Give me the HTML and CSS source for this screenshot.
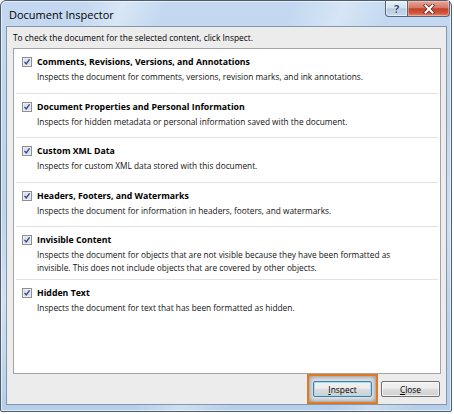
FILE: index.html
```html
<!DOCTYPE html>
<html lang="en">
<head>
<meta charset="utf-8">
<title>Document Inspector</title>
<link rel="stylesheet" href="styles.css">
</head>
<body>
<div class="window">
  <div class="titlebar">
    <span class="title">Document Inspector</span>
    <div class="caption">
      <span class="cap-btn help">?</span>
      <span class="cap-btn close">
        <svg width="12" height="10" viewBox="0 0 12 10" aria-hidden="true">
          <path d="M2.5 1.5 L9.5 8.5 M9.5 1.5 L2.5 8.5" stroke="#5a2a24" stroke-width="3.6" stroke-linecap="square"/>
          <path d="M2.5 1.5 L9.5 8.5 M9.5 1.5 L2.5 8.5" stroke="#ffffff" stroke-width="2" stroke-linecap="square"/>
        </svg>
      </span>
    </div>
  </div>

  <div class="client">
    <p class="intro">To check the document for the selected content, click Inspect.</p>

    <ul class="checks">
      <li class="check">
        <svg class="box" width="10" height="10" viewBox="0 0 10 10" aria-hidden="true"><rect x="0.5" y="0.5" width="9" height="9" fill="#f4f4f4" stroke="#8e8f8f"/><rect x="1.5" y="1.5" width="7" height="7" fill="#dde2ea"/><path d="M2.5 4.9 L4.2 6.9 L7.6 2.4" fill="none" stroke="#2a4594" stroke-width="1.3"/></svg>
        <div class="check-text">
          <div class="check-title">Comments, Revisions, Versions, and Annotations</div>
          <div class="check-desc">Inspects the document for comments, versions, revision marks, and ink annotations.</div>
        </div>
      </li>
      <li class="check">
        <svg class="box" width="10" height="10" viewBox="0 0 10 10" aria-hidden="true"><rect x="0.5" y="0.5" width="9" height="9" fill="#f4f4f4" stroke="#8e8f8f"/><rect x="1.5" y="1.5" width="7" height="7" fill="#dde2ea"/><path d="M2.5 4.9 L4.2 6.9 L7.6 2.4" fill="none" stroke="#2a4594" stroke-width="1.3"/></svg>
        <div class="check-text">
          <div class="check-title">Document Properties and Personal Information</div>
          <div class="check-desc">Inspects for hidden metadata or personal information saved with the document.</div>
        </div>
      </li>
      <li class="check">
        <svg class="box" width="10" height="10" viewBox="0 0 10 10" aria-hidden="true"><rect x="0.5" y="0.5" width="9" height="9" fill="#f4f4f4" stroke="#8e8f8f"/><rect x="1.5" y="1.5" width="7" height="7" fill="#dde2ea"/><path d="M2.5 4.9 L4.2 6.9 L7.6 2.4" fill="none" stroke="#2a4594" stroke-width="1.3"/></svg>
        <div class="check-text">
          <div class="check-title">Custom XML Data</div>
          <div class="check-desc">Inspects for custom XML data stored with this document.</div>
        </div>
      </li>
      <li class="check">
        <svg class="box" width="10" height="10" viewBox="0 0 10 10" aria-hidden="true"><rect x="0.5" y="0.5" width="9" height="9" fill="#f4f4f4" stroke="#8e8f8f"/><rect x="1.5" y="1.5" width="7" height="7" fill="#dde2ea"/><path d="M2.5 4.9 L4.2 6.9 L7.6 2.4" fill="none" stroke="#2a4594" stroke-width="1.3"/></svg>
        <div class="check-text">
          <div class="check-title">Headers, Footers, and Watermarks</div>
          <div class="check-desc">Inspects the document for information in headers, footers, and watermarks.</div>
        </div>
      </li>
      <li class="check check--wrap">
        <svg class="box" width="10" height="10" viewBox="0 0 10 10" aria-hidden="true"><rect x="0.5" y="0.5" width="9" height="9" fill="#f4f4f4" stroke="#8e8f8f"/><rect x="1.5" y="1.5" width="7" height="7" fill="#dde2ea"/><path d="M2.5 4.9 L4.2 6.9 L7.6 2.4" fill="none" stroke="#2a4594" stroke-width="1.3"/></svg>
        <div class="check-text">
          <div class="check-title">Invisible Content</div>
          <div class="check-desc">Inspects the document for objects that are not visible because they have been formatted as<br>invisible. This does not include objects that are covered by other objects.</div>
        </div>
      </li>
      <li class="check">
        <svg class="box" width="10" height="10" viewBox="0 0 10 10" aria-hidden="true"><rect x="0.5" y="0.5" width="9" height="9" fill="#f4f4f4" stroke="#8e8f8f"/><rect x="1.5" y="1.5" width="7" height="7" fill="#dde2ea"/><path d="M2.5 4.9 L4.2 6.9 L7.6 2.4" fill="none" stroke="#2a4594" stroke-width="1.3"/></svg>
        <div class="check-text">
          <div class="check-title">Hidden Text</div>
          <div class="check-desc">Inspects the document for text that has been formatted as hidden.</div>
        </div>
      </li>
    </ul>

    <div class="actions">
      <span class="callout"><button class="btn default" type="button"><u>I</u>nspect</button></span>
      <button class="btn" type="button"><u>C</u>lose</button>
    </div>
  </div>
</div>
</body>
</html>
```
FILE: styles.css
```css
html, body {
  margin: 0;
  padding: 0;
  background: #ffffff;
}

body {
  width: 454px;
  height: 414px;
  font-family: "Open Sans", "Noto Sans", sans-serif;
  color: #000000;
}

/* Aero-style glass frame */
.window {
  width: 452px;
  height: 412px;
  box-sizing: border-box;
  border: 1px solid #4f5d6c;
  border-radius: 6px 6px 2px 2px;
  padding: 0 4px 6px 5px;
  display: flex;
  flex-direction: column;
  background:
    linear-gradient(112deg,
      rgba(255,255,255,0) 0 14%,
      rgba(255,255,255,.35) 20%,
      rgba(255,255,255,0) 27%,
      rgba(255,255,255,0) 48%,
      rgba(255,255,255,.32) 56%,
      rgba(255,255,255,0) 64%,
      rgba(255,255,255,0) 80%,
      rgba(255,255,255,.28) 87%,
      rgba(255,255,255,0) 94%),
    linear-gradient(#c4d9f1, #b6cfea);
  box-shadow: inset 0 0 0 1px rgba(255,255,255,.55);
}

.titlebar {
  height: 25px;
  flex: none;
  display: flex;
  justify-content: space-between;
  align-items: flex-start;
  margin-right: -3px;
}

.title {
  padding: 6px 0 0 3px;
  font-size: 11px;
  line-height: 15px;
  color: #000;
}

.caption {
  display: flex;
}

.cap-btn {
  height: 16px;
  box-sizing: border-box;
  border: 1px solid #566779;
  border-top: none;
  display: flex;
  align-items: center;
  justify-content: center;
}

.cap-btn.help {
  width: 23px;
  border-radius: 0 0 0 4px;
  background: linear-gradient(#e6eef8 0%, #d5e2f0 45%, #b7cbe2 52%, #c7d9ec 100%);
  box-shadow: inset 0 0 0 1px rgba(255,255,255,.5);
  font-weight: 700;
  font-size: 11px;
  line-height: 14px;
  color: #2c4566;
  text-shadow: 0 0 1px #fff, 0 0 1px #fff;
}

.cap-btn.close {
  width: 42px;
  border-left: none;
  border-radius: 0 0 4px 0;
  background: linear-gradient(#e7a898 0%, #d77764 45%, #c2412c 52%, #d1553d 80%, #e28a6e 100%);
  box-shadow: inset 0 0 0 1px rgba(255,220,210,.45);
}

/* Dialog client area */
.client {
  flex: 1;
  display: flex;
  flex-direction: column;
  border: 1px solid #8596a8;
  background: #ececec;
}

.intro {
  margin: 0 0 4px;
  padding: 5px 0 0 6px;
  font-size: 8.4px;
  line-height: 12px;
}

.checks {
  flex: 1;
  list-style: none;
  margin: 0 5px 0 6px;
  padding: 0 2px;
  background: #ffffff;
  border: 1px solid #a3a3a3;
}

.check {
  display: flex;
  align-items: flex-start;
  gap: 5px;
  padding: 7px 0 9.5px 6px;
  border-top: 1px solid #e2e2e2;
}

.check:first-child {
  border-top: none;
  padding-top: 7px;
}

.check--wrap {
  padding-bottom: 5px;
}

.box {
  flex: none;
  margin-top: 1px;
}

.check-title {
  font-weight: 700;
  font-size: 8.75px;
  line-height: 12px;
}

.check-desc {
  margin-top: 2px;
  font-size: 8.3px;
  line-height: 13px;
  color: #111;
}

/* Button row */
.actions {
  height: 30px;
  flex: none;
  display: flex;
  justify-content: flex-end;
  align-items: center;
  gap: 3px;
  padding-right: 6px;
}

.callout {
  height: 30px;
  box-sizing: border-box;
  display: flex;
  align-items: center;
  padding: 0 4px;
  border: 2px solid #e07a22;
  background: #e2e2e2;
  box-shadow: inset 0 0 4px 1px rgba(0,0,0,.35);
}

.btn {
  width: 59px;
  height: 16px;
  box-sizing: border-box;
  padding: 0;
  border: 1px solid #707070;
  border-radius: 2px;
  background: linear-gradient(#f3f3f3 0%, #ebebeb 46%, #dcdcdc 52%, #cfcfcf 100%);
  box-shadow: inset 0 0 0 1px rgba(255,255,255,.7);
  font-family: "Open Sans", "Noto Sans", sans-serif;
  font-size: 8.4px;
  line-height: 13px;
  color: #000;
}

.btn.default {
  border-color: #3c7fb1;
  box-shadow: inset 0 0 0 1px #a8dcf6;
}
```
